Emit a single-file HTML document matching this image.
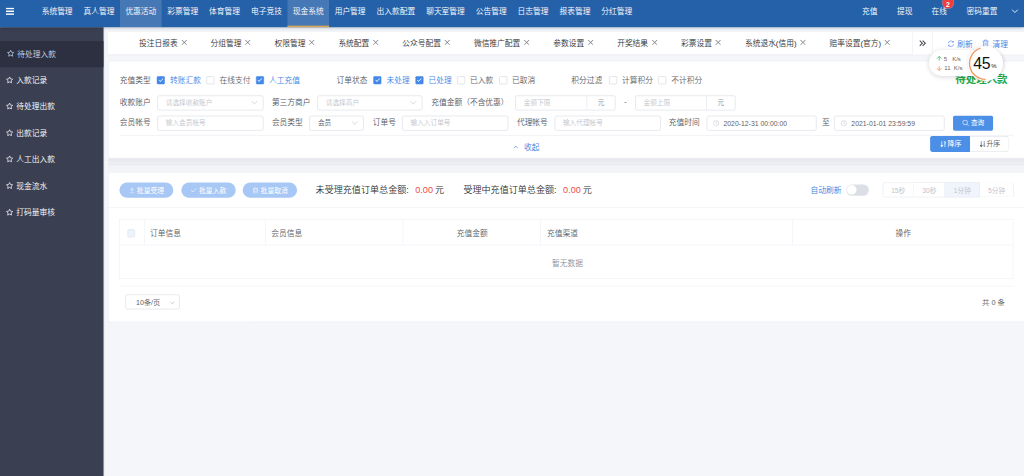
<!DOCTYPE html>
<html lang="zh-CN">
<head>
<meta charset="utf-8">
<title>待处理入款</title>
<style>
*{box-sizing:border-box;margin:0;padding:0}
html,body{width:1024px;height:476px;overflow:hidden;background:#f4f6fa}
body{font-weight:350;font-family:"Liberation Sans","Noto Sans CJK SC",sans-serif;color:#303133;position:relative}
#app{position:absolute;left:0;top:0;width:1920px;height:893px;transform:scale(.533333);transform-origin:0 0;background:#f4f6fa;font-size:14.5px;overflow:hidden}
.abs{position:absolute}
#nav{position:absolute;left:0;top:0;width:1920px;height:51px;background:#2561a9;box-shadow:0 2px 8px rgba(0,21,41,.28);z-index:5;color:#fff}
#nav .it{position:absolute;top:0;height:51px;line-height:43px;text-align:center;font-size:14.5px;white-space:nowrap}
#nav .hov{background:rgba(255,255,255,.15)}
#nav .act{background:rgba(255,255,255,.15);border-bottom:3px solid #d8a657}
#side{position:absolute;left:0;top:51px;width:194px;height:842px;background:#3a3f52;z-index:4;box-shadow:1px 0 2px rgba(0,21,41,.18)}
#side .mi{position:absolute;left:0;width:194px;height:49.5px;line-height:49.5px;color:#fff;font-size:14.5px;white-space:nowrap}
#side .mi svg{position:absolute;left:11px;top:16.2px;width:14px;height:14px}
#side .mi span{position:absolute;left:30.5px}
#side .mi.on{background:#2d3041;color:#c3d9f5;height:48.6px}
#side .mi.on svg{left:13px}
#side .mi.on span{left:32.5px}
#tabs{position:absolute;left:202px;top:59.5px;width:1718px;height:42px;background:#fff;box-shadow:0 1px 4px rgba(0,21,41,.12);font-size:14.5px;line-height:43px;color:#303133;white-space:nowrap}
#tabs .t{display:inline-block;vertical-align:top}
#tabs .x{display:inline-block;width:14px;margin-left:5px;margin-right:42.8px;vertical-align:top;position:relative;height:42px}
#tabs .x:before,#tabs .x:after{content:"";position:absolute;left:0.5px;top:19.8px;width:13px;height:1.1px;background:#5f6368;transform:rotate(45deg)}
#tabs .x:after{transform:rotate(-45deg)}
.card{position:absolute;background:#fff;border:1px solid #e9ecf2;border-radius:4px}
.lbl{position:absolute;font-size:14.5px;color:#54575e;white-space:nowrap;line-height:20px;height:20px}
.cb{position:absolute;width:14.8px;height:14.8px;border:1px solid #ccd0d8;border-radius:2px;background:#fff}
.cb.on{background:#4488e8;border-color:#4488e8}
.cb.on:after{content:"";position:absolute;left:4.4px;top:1.2px;width:3.4px;height:7.4px;border:1.5px solid #fff;border-left:0;border-top:0;transform:rotate(45deg)}
.cbl{position:absolute;font-size:14.5px;color:#606266;white-space:nowrap;line-height:20px;height:20px}
.cbl.on{color:#3d86e8}
.inp{position:absolute;height:28px;border:1px solid #d2d6de;border-radius:4px;background:#fff;font-size:12.5px;line-height:26px;color:#c0c4cc;padding-left:15px;white-space:nowrap;overflow:hidden}
.inp.v{color:#606266}
.app{position:absolute;height:28px;border:1px solid #dcdfe6;border-left:0;border-radius:0 4px 4px 0;background:#fff;font-size:12.5px;line-height:26px;color:#909399;text-align:center}
.chev{position:absolute;right:12px;top:6.5px;width:8px;height:8px;border:1.2px solid #c0c4cc;border-left:0;border-top:0;transform:rotate(45deg)}
.btn{position:absolute;font-weight:400;height:28px;line-height:28px;font-size:12.5px;color:#fff;text-align:center;white-space:nowrap}
.hl{position:absolute;height:1px;background:#ebeef5}
.vl{position:absolute;width:1px;background:#ebeef5}
.th{position:absolute;font-size:14.5px;color:#606266;white-space:nowrap;line-height:20px;height:20px}
</style>
</head>
<body>
<div id="app">

<div id="nav">
<svg class="abs" style="left:11px;top:14px" width="17" height="15" viewBox="0 0 17 15"><rect x="0" y="0.5" width="15.2" height="2.7" fill="#fff"/><rect x="0" y="5.8" width="15.2" height="2.7" fill="#fff"/><rect x="0" y="11.1" width="15.2" height="2.7" fill="#fff"/></svg>
<div class="it" style="left:67.9px;width:78.48px">系统管理</div>
<div class="it" style="left:146.38px;width:78.48px">真人管理</div>
<div class="it hov" style="left:224.86px;width:78.48px">优惠活动</div>
<div class="it" style="left:303.34px;width:78.48px">彩票管理</div>
<div class="it" style="left:381.82px;width:78.48px">体育管理</div>
<div class="it" style="left:460.3px;width:78.48px">电子竞技</div>
<div class="it act" style="left:538.78px;width:78.48px">现金系统</div>
<div class="it" style="left:617.26px;width:78.48px">用户管理</div>
<div class="it" style="left:695.74px;width:93.05px">出入款配置</div>
<div class="it" style="left:788.79px;width:93.05px">聊天室管理</div>
<div class="it" style="left:881.84px;width:78.48px">公告管理</div>
<div class="it" style="left:960.32px;width:78.48px">日志管理</div>
<div class="it" style="left:1038.8px;width:78.48px">报表管理</div>
<div class="it" style="left:1117.28px;width:78.48px">分红管理</div>
<div class="it" style="left:1616.25px">充值</div>
<div class="it" style="left:1681.88px">提现</div>
<div class="it" style="left:1746.56px">在线</div>
<div class="it" style="left:1812.19px">密码重置</div>
<div class="abs" style="left:1766.5px;top:-5.6px;width:21.4px;height:21.4px;border-radius:10.7px;background:#f03e3e;box-shadow:0 0 0 1px rgba(255,255,255,.35);color:#fff;font-size:12.8px;line-height:29px;text-align:center;font-weight:bold">2</div>
<svg class="abs" style="left:1896px;top:16.3px" width="14" height="10" viewBox="0 0 14 10"><path d="M1.5 2 L7 7.5 L12.5 2" fill="none" stroke="#fff" stroke-width="1.6"/></svg>
</div>

<div id="side">
<div class="mi on" style="top:26px"><svg viewBox="0 0 14 14"><path d="M7 1.3 L8.75 5 L12.8 5.5 L9.85 8.3 L10.6 12.4 L7 10.45 L3.4 12.4 L4.15 8.3 L1.2 5.5 L5.25 5 Z" fill="none" stroke="currentColor" stroke-width="1.35" stroke-linejoin="round"/></svg><span>待处理入款</span></div>
<div class="mi" style="top:75.56px"><svg viewBox="0 0 14 14"><path d="M7 1.3 L8.75 5 L12.8 5.5 L9.85 8.3 L10.6 12.4 L7 10.45 L3.4 12.4 L4.15 8.3 L1.2 5.5 L5.25 5 Z" fill="none" stroke="currentColor" stroke-width="1.35" stroke-linejoin="round"/></svg><span>入款记录</span></div>
<div class="mi" style="top:125.12px"><svg viewBox="0 0 14 14"><path d="M7 1.3 L8.75 5 L12.8 5.5 L9.85 8.3 L10.6 12.4 L7 10.45 L3.4 12.4 L4.15 8.3 L1.2 5.5 L5.25 5 Z" fill="none" stroke="currentColor" stroke-width="1.35" stroke-linejoin="round"/></svg><span>待处理出款</span></div>
<div class="mi" style="top:174.68px"><svg viewBox="0 0 14 14"><path d="M7 1.3 L8.75 5 L12.8 5.5 L9.85 8.3 L10.6 12.4 L7 10.45 L3.4 12.4 L4.15 8.3 L1.2 5.5 L5.25 5 Z" fill="none" stroke="currentColor" stroke-width="1.35" stroke-linejoin="round"/></svg><span>出款记录</span></div>
<div class="mi" style="top:224.24px"><svg viewBox="0 0 14 14"><path d="M7 1.3 L8.75 5 L12.8 5.5 L9.85 8.3 L10.6 12.4 L7 10.45 L3.4 12.4 L4.15 8.3 L1.2 5.5 L5.25 5 Z" fill="none" stroke="currentColor" stroke-width="1.35" stroke-linejoin="round"/></svg><span>人工出入款</span></div>
<div class="mi" style="top:273.8px"><svg viewBox="0 0 14 14"><path d="M7 1.3 L8.75 5 L12.8 5.5 L9.85 8.3 L10.6 12.4 L7 10.45 L3.4 12.4 L4.15 8.3 L1.2 5.5 L5.25 5 Z" fill="none" stroke="currentColor" stroke-width="1.35" stroke-linejoin="round"/></svg><span>现金流水</span></div>
<div class="mi" style="top:323.36px"><svg viewBox="0 0 14 14"><path d="M7 1.3 L8.75 5 L12.8 5.5 L9.85 8.3 L10.6 12.4 L7 10.45 L3.4 12.4 L4.15 8.3 L1.2 5.5 L5.25 5 Z" fill="none" stroke="currentColor" stroke-width="1.35" stroke-linejoin="round"/></svg><span>打码量审核</span></div>
</div>

<div id="tabs"><div class="abs" style="left:58.6px;top:0;white-space:nowrap">
<span class="t">投注日报表</span><span class="x"></span><span class="t">分组管理</span><span class="x"></span><span class="t">权限管理</span><span class="x"></span><span class="t">系统配置</span><span class="x"></span><span class="t">公众号配置</span><span class="x"></span><span class="t">微信推广配置</span><span class="x"></span><span class="t">参数设置</span><span class="x"></span><span class="t">开奖结果</span><span class="x"></span><span class="t">彩票设置</span><span class="x"></span><span class="t">系统退水(信用)</span><span class="x"></span><span class="t">赔率设置(官方)</span><span class="x"></span>
</div>
<div class="abs" style="left:1508.94px;top:0;width:300px;height:42px;background:#fff;border-left:1px solid #e8eaf0"></div>
<div class="abs" style="left:1546.44px;top:0;width:1px;height:42px;background:#e8eaf0"></div>
<svg class="abs" style="left:1520.05px;top:13px" width="16" height="16" viewBox="0 0 16 16"><path d="M2.5 3 L7.5 8 L2.5 13 M8 3 L13 8 L8 13" fill="none" stroke="#44474c" stroke-width="1.9"/></svg>
<svg class="abs" style="left:1573.56px;top:15.060000000000002px" width="14" height="14" viewBox="0 0 14 14"><path d="M1.9 6.1 A5.2 5.2 0 0 1 11.3 4.1 M12.1 7.9 A5.2 5.2 0 0 1 2.7 9.9" fill="none" stroke="#3d7de0" stroke-width="1.05"/><path d="M11.7 1.9 L11.5 4.3 L9.1 4.1 M2.3 12.1 L2.5 9.7 L4.9 9.9" fill="none" stroke="#3d7de0" stroke-width="1"/></svg>
<div class="abs" style="left:1592.84px;top:2.3px;color:#3d7de0">刷新</div>
<svg class="abs" style="left:1638.81px;top:13px" width="14" height="15" viewBox="0 0 14 15"><path d="M1.5 4 H12.5 M5 4 V2 H9 V4 M3 4 V13.5 H11 V4 M5.8 6.5 V11 M8.2 6.5 V11" fill="none" stroke="#3d7de0" stroke-width="1"/></svg>
<div class="abs" style="left:1658.94px;top:2.3px;color:#3d7de0">清理</div>
</div>

<div class="card" style="left:203px;top:113.5px;width:1740px;height:183.3px"></div>
<div class="lbl" style="left:224.44px;top:140.38px">充值类型</div>
<div class="cb on" style="left:294.35px;top:142.98px"></div><div class="cbl on" style="left:318.75px;top:140.38px">转账汇款</div>
<div class="cb" style="left:387.16px;top:142.98px"></div><div class="cbl" style="left:411.56px;top:140.38px">在线支付</div>
<div class="cb on" style="left:479.98px;top:142.98px"></div><div class="cbl on" style="left:504.38px;top:140.38px">人工充值</div>
<div class="lbl" style="left:631.12px;top:140.38px">订单状态</div>
<div class="cb on" style="left:700.38px;top:142.98px"></div><div class="cbl on" style="left:724.78px;top:140.38px">未处理</div>
<div class="cb on" style="left:779.0400000000001px;top:142.98px"></div><div class="cbl on" style="left:803.44px;top:140.38px">已处理</div>
<div class="cb" style="left:857.0400000000001px;top:142.98px"></div><div class="cbl" style="left:881.44px;top:140.38px">已入款</div>
<div class="cb" style="left:935.7900000000001px;top:142.98px"></div><div class="cbl" style="left:960.19px;top:140.38px">已取消</div>
<div class="lbl" style="left:1071.09px;top:140.38px">积分过滤</div>
<div class="cb" style="left:1141.85px;top:142.98px"></div><div class="cbl" style="left:1166.25px;top:140.38px">计算积分</div>
<div class="cb" style="left:1234.29px;top:142.98px"></div><div class="cbl" style="left:1258.69px;top:140.38px">不计积分</div>
<div class="lbl" style="left:224.44px;top:181.1px">收款账户</div>
<div class="inp" style="left:294.75px;top:178.78px;width:199.12px;">请选择收款账户<i class=chev></i></div>
<div class="lbl" style="left:509.81px;top:181.1px">第三方商户</div>
<div class="inp" style="left:594.75px;top:178.78px;width:197.44px;">请选择商户<i class=chev></i></div>
<div class="lbl" style="left:808.59px;top:181.1px">充值金额（不含优惠）</div>
<div class="inp" style="left:966.19px;top:178.78px;width:188.06px">金额下限<i class="abs" style="left:132.69px;top:0;width:1px;height:26px;background:#dcdfe6"></i><span class="abs" style="left:133.69px;top:0;width:52.37px;text-align:center;color:#909399">元</span></div>
<div class="lbl" style="left:1170.56px;top:179.6px;color:#606266">-</div>
<div class="inp" style="left:1190.62px;top:178.78px;width:187.97px">金额上限<i class="abs" style="left:132.6px;top:0;width:1px;height:26px;background:#dcdfe6"></i><span class="abs" style="left:133.6px;top:0;width:52.37px;text-align:center;color:#909399">元</span></div>
<div class="lbl" style="left:224.44px;top:220.29px">会员帐号</div>
<div class="inp" style="left:294.75px;top:216.84px;width:199.12px;">输入会员帐号</div>
<div class="lbl" style="left:509.81px;top:220.29px">会员类型</div>
<div class="inp v" style="left:580.12px;top:216.84px;width:102.38px;">会员<i class=chev></i></div>
<div class="lbl" style="left:699.0px;top:220.29px">订单号</div>
<div class="inp" style="left:753.75px;top:216.84px;width:199.5px;">输入入订单号</div>
<div class="lbl" style="left:969.19px;top:220.29px">代理帐号</div>
<div class="inp" style="left:1039.5px;top:216.84px;width:199.12px;">输入代理帐号</div>
<div class="lbl" style="left:1253.91px;top:220.29px">充值时间</div>
<div class="inp v" style="left:1324.5px;top:216.84px;width:206.44px;padding-left:31px;font-size:12.85px;line-height:27.5px"><svg class="abs" style="left:11px;top:7px" width="12" height="12" viewBox="0 0 12 12"><circle cx="6" cy="6" r="5" fill="none" stroke="#c0c4cc" stroke-width="1"/><path d="M6 3 V6.3 H8.5" fill="none" stroke="#c0c4cc" stroke-width="1"/></svg>2020-12-31 00:00:00</div>
<div class="lbl" style="left:1541.25px;top:220.29px">至</div>
<div class="inp v" style="left:1564.31px;top:216.84px;width:206.81px;padding-left:31px;font-size:12.85px;line-height:27.5px"><svg class="abs" style="left:11px;top:7px" width="12" height="12" viewBox="0 0 12 12"><circle cx="6" cy="6" r="5" fill="none" stroke="#c0c4cc" stroke-width="1"/><path d="M6 3 V6.3 H8.5" fill="none" stroke="#c0c4cc" stroke-width="1"/></svg>2021-01-01 23:59:59</div>
<div class="btn" style="left:1786.88px;top:216.84px;width:75.33px;height:28.6px;background:#4b8fe7;border-radius:3px;line-height:29px"><svg style="vertical-align:-2px;margin-right:4px" width="13" height="13" viewBox="0 0 13 13"><circle cx="5.6" cy="5.6" r="4.4" fill="none" stroke="#fff" stroke-width="1.2"/><path d="M8.8 8.8 L12.2 12.2" stroke="#fff" stroke-width="1.2"/></svg>查询</div>
<div class="hl" style="left:224.44px;top:253.19px;width:1675.68px;background:#e4e7ed"></div>
<svg class="abs" style="left:961.75px;top:272.0px" width="10" height="8" viewBox="0 0 10 8"><path d="M1 6 L5 2 L9 6" fill="none" stroke="#3d7de0" stroke-width="1.2"/></svg>
<div class="lbl" style="left:982.5px;top:266.0px;color:#3d7de0">收起</div>
<div class="btn" style="left:1744.22px;top:255.37px;width:74.53px;height:29.44px;line-height:29.44px;background:#4b8fe7;border-radius:4px 0 0 4px;font-size:13px"><svg style="vertical-align:-2.5px;margin-right:2px;margin-left:3px" width="11" height="13" viewBox="0 0 11 13"><path d="M2.8 0.8 V10" stroke="#fff" stroke-width="1.3" fill="none"/><path d="M-0.2 8 H5.8 L2.8 12.6 Z" fill="#fff"/><text x="6.4" y="5.4" font-size="6.5" font-weight="bold" fill="#fff" font-family="Liberation Sans,sans-serif">9</text><text x="6.4" y="12.4" font-size="6.5" font-weight="bold" fill="#fff" font-family="Liberation Sans,sans-serif">1</text></svg>降序</div>
<div class="btn" style="left:1818.75px;top:255.37px;width:72.56px;height:29.44px;line-height:27.44px;background:#fff;border:1px solid #d8dce3;border-left:0;border-radius:0 4px 4px 0;color:#606266;font-size:13px"><svg style="vertical-align:-2.5px;margin-right:2px;margin-left:3px" width="11" height="13" viewBox="0 0 11 13"><path d="M2.8 0.8 V10" stroke="#606266" stroke-width="1.3" fill="none"/><path d="M-0.2 8 H5.8 L2.8 12.6 Z" fill="#606266"/><text x="6.4" y="5.4" font-size="6.5" font-weight="bold" fill="#606266" font-family="Liberation Sans,sans-serif">1</text><text x="6.4" y="12.4" font-size="6.5" font-weight="bold" fill="#606266" font-family="Liberation Sans,sans-serif">9</text></svg>升序</div>
<div class="abs" style="left:1791.19px;top:133.07999999999998px;font-size:19.6px;line-height:30px;font-weight:bold;color:#28a745;white-space:nowrap">待处理入款</div>
<div class="abs" style="left:203px;top:297px;width:1740px;height:12.4px;background:linear-gradient(to bottom,#e4e6ec 0%,#e8eaf0 35%,#eff1f5 100%)"></div>
<div class="abs" style="left:203px;top:308.3px;width:1740px;height:2px;background:#e3e6ec"></div>
<div class="abs" style="left:203px;top:310.2px;width:1740px;height:12.4px;background:linear-gradient(to bottom,#f0f2f6,#f3f5f9)"></div>
<div class="card" style="left:203px;top:322.5px;width:1740px;height:281.06px"></div>
<div class="btn" style="left:223.88px;top:341.59px;width:101.5px;height:29px;line-height:29.5px;font-size:12.8px;background:#a7c7f5;border-radius:14.5px"><svg style="vertical-align:-2px;margin-right:4px" width="11" height="12" viewBox="0 0 11 12"><path d="M5.5 1 V8.5 M2.5 5.5 L5.5 2.5 L8.5 5.5 M1 10.8 H10" fill="none" stroke="#fff" stroke-width="1.1"/></svg>批量受理</div>
<div class="btn" style="left:339.84px;top:341.59px;width:101.78px;height:29px;line-height:29.5px;font-size:12.8px;background:#a7c7f5;border-radius:14.5px"><svg style="vertical-align:-1px;margin-right:4px" width="12" height="11" viewBox="0 0 12 11"><path d="M1.5 5.5 L4.8 8.8 L10.8 2.5" fill="none" stroke="#fff" stroke-width="1.2"/></svg>批量入款</div>
<div class="btn" style="left:455.25px;top:341.59px;width:101.87px;height:29px;line-height:29.5px;font-size:12.8px;background:#a7c7f5;border-radius:14.5px"><svg style="vertical-align:-2px;margin-right:4px" width="12" height="12" viewBox="0 0 12 12"><path d="M1 3 H11 M4 3 V1.3 H8 V3 M2.3 3 V11 H9.7 V3 M4.8 5 V9 M7.2 5 V9" fill="none" stroke="#fff" stroke-width="1"/></svg>批量取消</div>
<div class="abs" style="left:591.75px;top:344.62px;font-size:17px;line-height:24px;white-space:nowrap;color:#303133">未受理充值订单总金额: <span style="color:#f04a4a;margin-left:7.5px;margin-right:-1px">0.00</span> 元</div>
<div class="abs" style="left:868.88px;top:344.62px;font-size:17px;line-height:24px;white-space:nowrap;color:#303133">受理中充值订单总金额: <span style="color:#f04a4a;margin-left:7.5px;margin-right:-1px">0.00</span> 元</div>
<div class="lbl" style="left:1519.69px;top:346.81px;color:#3d7de0">自动刷新</div>
<div class="abs" style="left:1587.19px;top:346.25px;width:41.5px;height:20.5px;border-radius:10.25px;background:#dcdfe6"><div class="abs" style="left:1px;top:1px;width:18px;height:18px;border-radius:9px;background:#fff"></div></div>
<div class="btn" style="left:1654.5px;top:342.19px;width:59.25px;line-height:28px;border:1px solid #e4e7ed;border-radius:4px 0 0 4px;color:#c0c4cc;background:#fff">15秒</div>
<div class="btn" style="left:1713.75px;top:342.19px;width:58.59px;line-height:28px;border:1px solid #e4e7ed;border-left:0;border-radius:0;color:#c0c4cc;background:#fff">30秒</div>
<div class="btn" style="left:1772.34px;top:342.19px;width:65.16px;line-height:28px;border:1px solid #e4e7ed;border-left:0;border-radius:0;color:#c0c4cc;background:#f0f4fc">1分钟</div>
<div class="btn" style="left:1837.5px;top:342.19px;width:63.19px;line-height:28px;border:1px solid #e4e7ed;border-left:0;border-radius:0 4px 4px 0;color:#c0c4cc;background:#fff">5分钟</div>
<div class="hl" style="left:204px;top:388.56px;width:1740px"></div>
<div class="abs" style="left:223.88px;top:410.62px;width:1676.24px;height:112.04px;border:1px solid #ebeef5"></div>
<div class="hl" style="left:223.88px;top:459.44px;width:1676.24px"></div>
<div class="vl" style="left:269.5px;top:410.62px;height:49.32px"></div>
<div class="vl" style="left:496.94px;top:410.62px;height:49.32px"></div>
<div class="vl" style="left:755.12px;top:410.62px;height:49.32px"></div>
<div class="vl" style="left:1013.12px;top:410.62px;height:49.32px"></div>
<div class="vl" style="left:1485.25px;top:410.62px;height:49.32px"></div>
<div class="cb" style="left:238.5px;top:429.97px;background:#edf2fc;border-color:#dcdfe6"></div>
<div class="th" style="left:281.25px;top:426.97px">订单信息</div>
<div class="th" style="left:508.69px;top:426.97px">会员信息</div>
<div class="th" style="left:835.38px;width:100px;text-align:center;top:426.97px">充值金额</div>
<div class="th" style="left:1025.62px;top:426.97px">充值渠道</div>
<div class="th" style="left:1643.5px;width:100px;text-align:center;top:426.97px">操作</div>
<div class="th" style="left:1014.06px;width:100px;text-align:center;top:483.12px;color:#909399">暂无数据</div>
<div class="hl" style="left:223.88px;top:536.22px;width:1676.24px"></div>
<div class="inp v" style="left:234.94px;top:552.0px;width:102.56px;padding-left:19px;font-size:13.4px;line-height:28px">10条/页<i class="chev" style="right:10px;top:9.5px;width:6px;height:6px"></i></div>
<div class="th" style="left:1841.25px;top:556.85px;font-size:13.8px">共 0 条</div>
</div>

<div style="position:absolute;left:928.8px;top:49.7px;width:74.7px;height:26.8px;border-radius:13.4px;background:#fff;box-shadow:0 1px 5px rgba(0,0,0,.16)"></div>
<div style="position:absolute;left:967.6px;top:45.5px;width:35.8px;height:35.8px;border-radius:50%;background:#fff;box-shadow:0 0 4px rgba(0,0,0,.10)"></div>
<svg style="position:absolute;left:924px;top:40px" width="88" height="44" viewBox="924 40 88 44"><path d="M985.5 79.4 A16 16 0 0 1 980.56 48.18" fill="none" stroke="#f7965a" stroke-width="1.35"/><path d="M939.2 60.6 V56.6 M937 58.6 L939.2 56.4 L941.4 58.6" fill="none" stroke="#3dba5e" stroke-width="0.8"/><path d="M939.2 66.3 V70.3 M937 68.3 L939.2 70.5 L941.4 68.3" fill="none" stroke="#f58a45" stroke-width="0.8"/></svg>
<div style="position:absolute;left:973.2px;top:54.1px;font-size:15.8px;line-height:20px;color:#111;white-space:nowrap;letter-spacing:-.2px">45</div>
<div style="position:absolute;left:991.3px;top:62px;font-size:6px;line-height:8px;color:#222;white-space:nowrap">%</div>
<div style="position:absolute;left:943.7px;top:54.6px;font-size:6px;line-height:8px;color:#666;white-space:nowrap">5</div>
<div style="position:absolute;left:952.2px;top:54.6px;font-size:6px;line-height:8px;color:#666;white-space:nowrap">K/s</div>
<div style="position:absolute;left:944.3px;top:64.4px;font-size:6px;line-height:8px;color:#666;white-space:nowrap">11</div>
<div style="position:absolute;left:953.8px;top:64.4px;font-size:6px;line-height:8px;color:#666;white-space:nowrap">K/s</div>
</body>
</html>
